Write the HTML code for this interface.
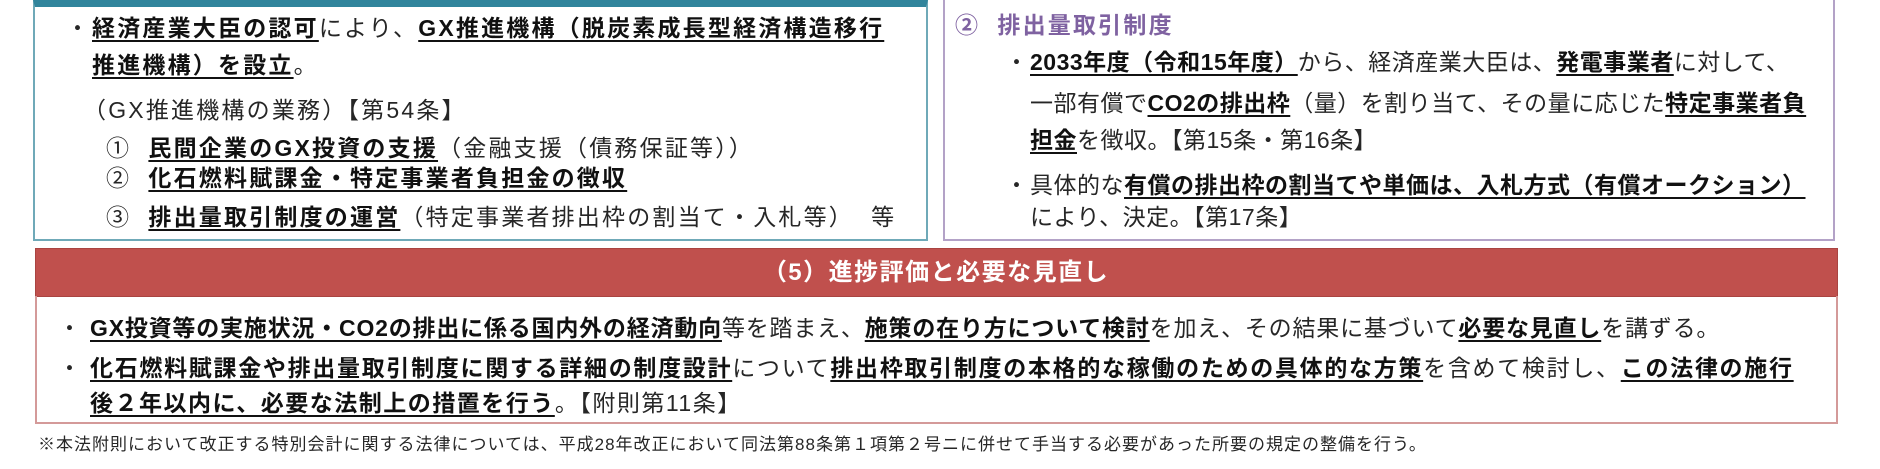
<!DOCTYPE html>
<html><head><meta charset="utf-8"><style>
*{margin:0;padding:0;box-sizing:border-box}
body{width:1880px;height:469px;background:#fff;position:relative;overflow:hidden;font-family:"Liberation Sans","Noto Sans CJK JP",sans-serif;color:#262626}
.box{position:absolute}
.l{position:absolute;white-space:nowrap;font-size:23px;letter-spacing:2.2px;line-height:30px}
b{font-weight:bold;color:#111;text-decoration:underline;text-decoration-thickness:2px;text-underline-offset:4px}
.dot{position:absolute;font-size:23px;line-height:30px}
.r{letter-spacing:0.5px}
</style></head><body>
<div class="box" style="left:33px;top:0;width:895px;height:241px;border:2px solid #6fa9b8;border-top:7px solid #31859c;"></div>
<div class="dot" style="left:66px;top:13px">・</div>
<div class="l" style="left:92px;top:13px"><b>経済産業大臣の認可</b>により、<b>GX推進機構（脱炭素成長型経済構造移行</b></div>
<div class="l" style="left:92px;top:50px"><b>推進機構）を設立</b>。</div>
<div class="l" style="left:83px;top:95px">（GX推進機構の業務）【第54条】</div>
<div class="l" style="left:106px;top:133px">①&nbsp;&nbsp;<b>民間企業のGX投資の支援</b>（金融支援（債務保証等））</div>
<div class="l" style="left:106px;top:163px">②&nbsp;&nbsp;<b>化石燃料賦課金・特定事業者負担金の徴収</b></div>
<div class="l" style="left:106px;top:202px">③&nbsp;&nbsp;<b>排出量取引制度の運営</b>（特定事業者排出枠の割当て・入札等）&nbsp;&nbsp;等</div>
<div class="box" style="left:943px;top:-3px;width:892px;height:244px;border:2px solid #b3a2c7;"></div>
<div class="l" style="left:955px;top:10px;color:#7f62a1;font-weight:bold">②&nbsp;&nbsp;排出量取引制度</div>
<div class="dot" style="left:1005px;top:47px">・</div>
<div class="l r" style="left:1030px;top:47px"><b>2033年度（令和15年度）</b>から、経済産業大臣は、<b>発電事業者</b>に対して、</div>
<div class="l r" style="left:1030px;top:88px">一部有償で<b>CO2の排出枠</b>（量）を割り当て、その量に応じた<b>特定事業者負</b></div>
<div class="l r" style="left:1030px;top:125px"><b>担金</b>を徴収。【第15条・第16条】</div>
<div class="dot" style="left:1005px;top:170px">・</div>
<div class="l r" style="left:1030px;top:170px">具体的な<b>有償の排出枠の割当てや単価は、入札方式（有償オークション）</b></div>
<div class="l r" style="left:1030px;top:202px">により、決定。【第17条】</div>
<div class="box" style="left:35px;top:248px;width:1803px;height:49px;background:#c0504d;border:1px solid #a94441;"></div>
<div class="l" style="left:0;width:1872px;text-align:center;top:258px;color:#fff;font-weight:bold;font-size:24px;letter-spacing:1.5px">（5）進捗評価と必要な見直し</div>
<div class="box" style="left:35px;top:296px;width:1803px;height:128px;border:2px solid #d49a99;border-top:none"></div>
<div class="dot" style="left:58px;top:313px">・</div>
<div class="l" style="left:90px;top:313px;letter-spacing:0.8px"><b>GX投資等の実施状況・CO2の排出に係る国内外の経済動向</b>等を踏まえ、<b>施策の在り方について検討</b>を加え、その結果に基づいて<b>必要な見直し</b>を講ずる。</div>
<div class="dot" style="left:58px;top:353px">・</div>
<div class="l" style="left:90px;top:353px;letter-spacing:1.7px"><b>化石燃料賦課金や排出量取引制度に関する詳細の制度設計</b>について<b>排出枠取引制度の本格的な稼働のための具体的な方策</b>を含めて検討し、<b>この法律の施行</b></div>
<div class="l" style="left:90px;top:388px;letter-spacing:1.5px"><b>後２年以内に、必要な法制上の措置を行う</b>。【附則第11条】</div>
<div class="l" style="left:38px;top:433px;font-size:17px;letter-spacing:1px;line-height:24px">※本法附則において改正する特別会計に関する法律については、平成28年改正において同法第88条第１項第２号ニに併せて手当する必要があった所要の規定の整備を行う。</div>
</body></html>
